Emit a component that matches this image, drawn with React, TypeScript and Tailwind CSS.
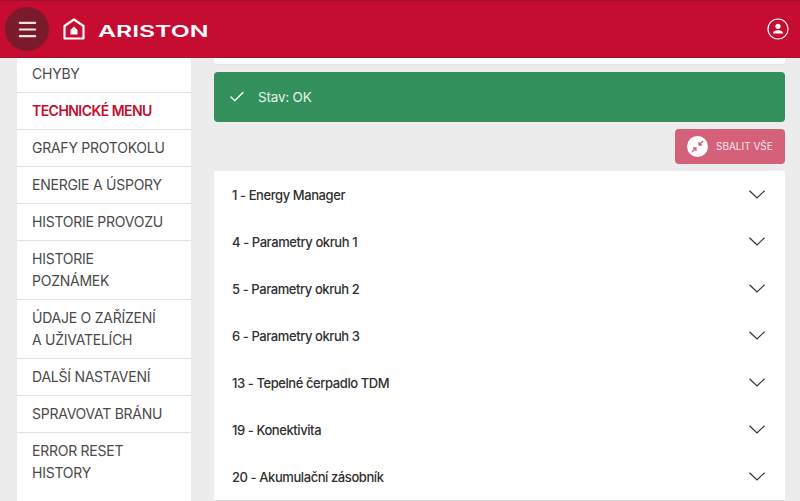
import React from "react";
import { Check, Menu } from "lucide-react";

const sideItems = [
  { label: "CHYBY", height: "h-[35px]", pad: "mt-[5px]" },
  { label: "TECHNICKÉ MENU", height: "h-[37px]", pad: "mt-[7px]", active: true },
  { label: "GRAFY PROTOKOLU", height: "h-[37px]", pad: "mt-[7px]" },
  { label: "ENERGIE A ÚSPORY", height: "h-[37px]", pad: "mt-[7px]" },
  { label: "HISTORIE PROVOZU", height: "h-[37px]", pad: "mt-[7px]" },
  { label: "HISTORIE\nPOZNÁMEK", height: "h-[59px]", pad: "mt-[7px]" },
  { label: "ÚDAJE O ZAŘÍZENÍ\nA UŽIVATELÍCH", height: "h-[59px]", pad: "mt-[7px]" },
  { label: "DALŠÍ NASTAVENÍ", height: "h-[37px]", pad: "mt-[7px]" },
  { label: "SPRAVOVAT BRÁNU", height: "h-[37px]", pad: "mt-[7px]" },
  { label: "ERROR RESET\nHISTORY", height: "h-[69px]", pad: "mt-[7px]" },
];

const sections = [
  "1 - Energy Manager",
  "4 - Parametry okruh 1",
  "5 - Parametry okruh 2",
  "6 - Parametry okruh 3",
  "13 - Tepelné čerpadlo TDM",
  "19 - Konektivita",
  "20 - Akumulační zásobník",
];

function Logo() {
  return (
    <div className="flex items-center gap-[13px]">
      <svg width="22" height="22" viewBox="0 0 22 22" fill="none" className="-mt-[1px]">
        <path
          d="M1.5 8 11 1.5 20.5 8V20.5h-19z"
          stroke="white"
          strokeWidth="2.2"
          strokeLinejoin="round"
        />
        <path d="M7.5 12 11 8.5l3.5 3.5v4.5h-7z" fill="white" />
      </svg>
      <span className="block w-[110px] mt-[5px] origin-left scale-x-[1.5] text-[16.5px] leading-none font-semibold text-white font-['Inter',sans-serif] whitespace-nowrap">
        ARISTON
      </span>
    </div>
  );
}

function App() {
  return (
    <div className="h-[501px] w-[800px] overflow-hidden flex flex-col bg-[#ececec] font-['Inter',sans-serif]">
      <header className="h-[58px] shrink-0 flex items-center justify-between bg-[#c60c30] border-t border-[#a01030] border-b border-b-[#b30d2d] pl-[5px] pr-[11px]">
        <div className="flex items-center gap-[14px]">
          <div className="w-[44px] h-[44px] rounded-full bg-[#7a1a2b] flex items-center justify-center">
            <Menu size={23} color="#f3e4e6" strokeWidth={2.3} />
          </div>
          <Logo />
        </div>
        <svg width="22" height="22" viewBox="0 0 22 22" fill="none">
          <circle cx="11" cy="11" r="10" stroke="white" strokeWidth="1.2" />
          <circle cx="11" cy="8.3" r="2.6" fill="white" />
          <path d="M6 15.5c0-2.4 2.2-3.3 5-3.3s5 .9 5 3.3z" fill="white" />
        </svg>
      </header>

      <div className="flex-1 flex pl-[17px] pr-[15px] gap-[23px] min-h-0">
        <nav className="w-[174px] shrink-0 bg-white flex flex-col">
          {sideItems.map((item) => (
            <div
              key={item.label}
              className={`${item.height} shrink-0 border-b border-[#e2e2e2] last:border-b-0 px-[15px] flex items-start`}
            >
              <span
                className={`${item.pad} whitespace-pre-line text-[14px] leading-[22px] tracking-[-0.25px] ${
                  item.active ? "font-semibold text-[#c60c30] tracking-[-0.55px]" : "text-[#4a4a4a]"
                }`}
              >
                {item.label}
              </span>
            </div>
          ))}
        </nav>

        <main className="flex-1 min-w-0 flex flex-col">
          <div className="h-[7px] bg-white rounded-b-[3px] border-b border-[#e2e2e2]" />
          <div className="mt-[7px] h-[51px] rounded-[4px] bg-[#33905d] flex items-center pl-[14px] gap-[12px] text-white">
            <Check size={18} strokeWidth={1.8} />
            <span className="text-[13.5px] tracking-[-0.2px] text-[#e6f2ea]">Stav: OK</span>
          </div>
          <div className="mt-[7px] flex justify-end">
            <button className="h-[35px] w-[110px] rounded-[4px] bg-[#d5607a] flex items-center pl-[12px] gap-[8px]">
              <span className="w-[21px] h-[21px] rounded-full bg-white flex items-center justify-center">
                <svg width="13" height="13" viewBox="0 0 13 13" fill="none" stroke="#d5607a" strokeWidth="1.3">
                  <path d="M12 1 8 5M8 2v3h3M1 12l4-4M2 8h3v3" />
                </svg>
              </span>
              <span className="text-[10px] text-[#f8e6ea] whitespace-nowrap">SBALIT VŠE</span>
            </button>
          </div>
          <div className="mt-[7px] bg-white flex flex-col border-b border-[#dddddd]">
            {sections.map((s) => (
              <div key={s} className="h-[47px] shrink-0 flex items-center justify-between pl-[18px] pr-[20px]">
                <span className="pt-[2px] text-[13px] font-medium text-[#2f2f2f] tracking-[-0.42px]">{s}</span>
                <svg width="16" height="9" viewBox="0 0 16 9" fill="none" stroke="#333333" strokeWidth="1.2">
                  <path d="M.5.8 8 8 15.5.8" />
                </svg>
              </div>
            ))}
          </div>
        </main>
      </div>
    </div>
  );
}

export default App;
